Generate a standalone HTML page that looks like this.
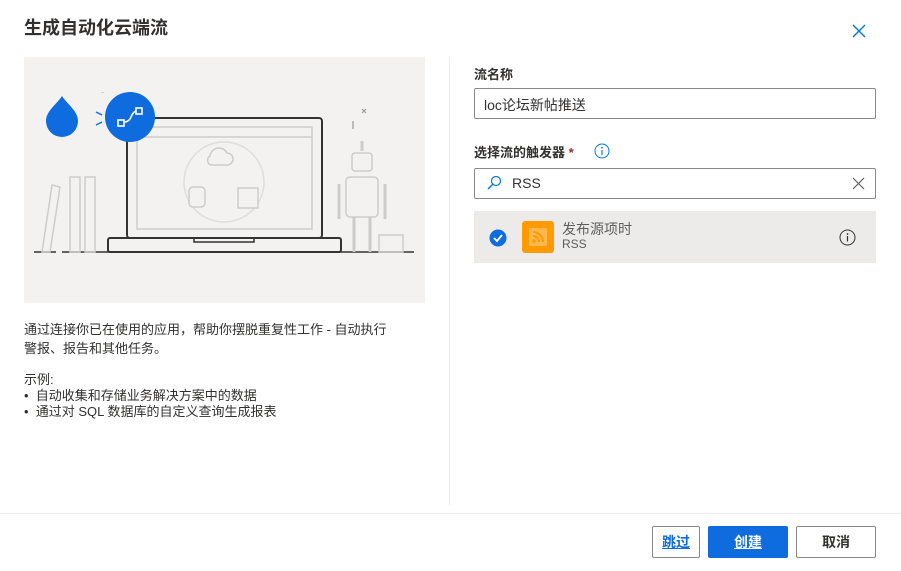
<!DOCTYPE html>
<html><head><meta charset="utf-8"><style>
*{box-sizing:border-box;margin:0;padding:0}
body{width:901px;height:571px;background:#fff;font-family:"Liberation Sans","Noto Sans CJK SC",sans-serif;color:#323130;position:relative;overflow:hidden;font-size:13px}
.a{position:absolute}
.inp{position:absolute;left:474px;width:402px;height:31px;border:1px solid #8a8886;border-radius:2px;font-size:14px}
.btn{position:absolute;top:526px;height:32px;border:1px solid #8a8886;border-radius:2px;font-size:14px;font-weight:bold;text-align:center;line-height:30px}
</style></head><body>
<div class="a" style="left:24px;top:14px;font-size:18px;font-weight:bold;color:#323130">生成自动化云端流</div>
<svg class="a" style="left:852px;top:24px" width="14" height="14"><path d="M1 1L13 13M13 1L1 13" stroke="#0078d4" stroke-width="1.4"/></svg>
<div class="a" style="left:24px;top:57px;width:401px;height:246px;background:#f3f2f1"></div>
<svg class="a" style="left:24px;top:57px" width="401" height="246" fill="none">
<path d="M38 20C33 28 22 35 22 45a16 16 0 0 0 32 0c0-10-11-17-16-25z" transform="translate(0,19)" fill="#0f6cde"/>
<path d="M72 55l6 3M72 68l6-3" stroke="#0f6cde" stroke-width="1.5"/>
<rect x="77" y="35" width="3" height="1" fill="#ccc"/>
<rect x="103" y="61" width="195" height="120" rx="3" stroke="#333" stroke-width="2"/>
<rect x="113" y="70" width="175" height="102" stroke="#ccc" stroke-width="1.5"/>
<path d="M113 80h175" stroke="#ccc" stroke-width="1.5"/>
<rect x="84" y="181" width="233" height="14" rx="2" stroke="#333" stroke-width="2"/>
<path d="M170 182v3h60v-3" stroke="#333" stroke-width="1.5"/>
<path d="M10 195h22M38 195h352" stroke="#333" stroke-width="1.5"/>
<circle cx="200" cy="125" r="40" stroke="#ddd" stroke-width="1.5"/>
<path d="M187 108h16a6 6 0 0 0 0-12 9 9 0 0 0-17 3 5 5 0 0 0 1 9z" fill="#f3f2f1" stroke="#ccc" stroke-width="1.5"/>
<rect x="165" y="130" width="16" height="20" rx="4" fill="#f3f2f1" stroke="#ccc" stroke-width="1.5"/>
<rect x="214" y="131" width="20" height="20" fill="#f3f2f1" stroke="#ccc" stroke-width="1.5"/>
<path d="M18 195l10-67 8 2-10 65zM46 120h10v75H46zM61 120h10v75H61z" stroke="#ccc" stroke-width="1.5"/>
<path d="M329 64v8M338 52l4 4M342 52l-4 4" stroke="#999" stroke-width="1.2"/>
<rect x="328" y="96" width="20" height="18" rx="3" stroke="#ccc" stroke-width="1.5"/>
<rect x="322" y="120" width="32" height="40" rx="4" stroke="#ccc" stroke-width="1.5"/>
<path d="M315 127v35M361 127v35M330 160v35M346 160v35M338 84v10" stroke="#ccc" stroke-width="3"/>
<rect x="355" y="178" width="24" height="17" stroke="#ccc" stroke-width="1.5"/>
</svg>
<svg class="a" style="left:104px;top:91px" width="52" height="52"><circle cx="26" cy="26" r="25" fill="#0f6cde"/><rect x="14" y="29" width="6" height="6" stroke="#fff" stroke-width="1.6" fill="none"/><rect x="32" y="17" width="6" height="6" stroke="#fff" stroke-width="1.6" fill="none"/><path d="M20 31q5 0 7-5t5-6" stroke="#fff" stroke-width="1.6" fill="none"/></svg>
<div class="a" style="left:24px;top:320px;line-height:19px;font-size:13px;color:#323130">通过连接你已在使用的应用，帮助你摆脱重复性工作 - 自动执行<br>警报、报告和其他任务。</div>
<div class="a" style="left:24px;top:372px;line-height:16px;font-size:13px">示例:<br>• &nbsp;自动收集和存储业务解决方案中的数据<br>• &nbsp;通过对 SQL 数据库的自定义查询生成报表</div>
<div class="a" style="left:449px;top:57px;width:1px;height:448px;background:#edebe9"></div>
<div class="a" style="left:0;top:513px;width:901px;height:1px;background:#edebe9"></div>
<div class="a" style="left:474px;top:64px;font-weight:bold;font-size:13px">流名称</div>
<div class="inp" style="top:88px;padding:6px 0 0 9px">loc论坛新帖推送</div>
<div class="a" style="left:474px;top:142px;font-weight:bold;font-size:13px">选择流的触发器 <span style="color:#a4262c">*</span></div>
<svg class="a" style="left:594px;top:143px" width="16" height="16"><circle cx="8" cy="8" r="7" stroke="#0078d4" fill="none"/><path d="M8 7v5" stroke="#0078d4" stroke-width="1.2"/><circle cx="8" cy="4.7" r=".9" fill="#0078d4"/></svg>
<div class="inp" style="top:168px;padding:6px 0 0 37px">RSS</div>
<svg class="a" style="left:486px;top:175px" width="16" height="16" fill="none"><circle cx="10" cy="6" r="4.5" stroke="#0078d4" stroke-width="1.2"/><path d="M7 9l-5 5" stroke="#0078d4" stroke-width="1.4"/></svg>
<svg class="a" style="left:852px;top:177px" width="13" height="13"><path d="M1 1l11 11M12 1L1 12" stroke="#605e5c" stroke-width="1.2"/></svg>
<div class="a" style="left:474px;top:211px;width:402px;height:52px;background:#edebe9"></div>
<svg class="a" style="left:489px;top:229px" width="18" height="18"><circle cx="9" cy="9" r="8.5" fill="#0f6cde"/><path d="M5 9l3 3 5-6" stroke="#fff" stroke-width="1.8" fill="none"/></svg>
<div class="a" style="left:522px;top:221px;width:32px;height:32px;background:#ff9a00;border-radius:3px"></div>
<svg class="a" style="left:529px;top:228px" width="18" height="18"><rect width="18" height="18" rx="2" fill="#ffb84d"/><circle cx="5" cy="13" r="1.8" fill="#ff9a00"/><path d="M4 8a6 6 0 0 1 6 6M4 4a10 10 0 0 1 10 10" stroke="#ff9a00" stroke-width="2" fill="none"/></svg>
<div class="a" style="left:562px;top:219px;font-size:14px;color:#605e5c">发布源项时</div>
<div class="a" style="left:562px;top:237px;font-size:12px;color:#605e5c">RSS</div>
<svg class="a" style="left:839px;top:229px" width="17" height="17"><circle cx="8.5" cy="8.5" r="7.5" stroke="#323130" fill="none"/><path d="M8.5 7v5.5" stroke="#323130" stroke-width="1.2"/><circle cx="8.5" cy="5" r=".9" fill="#323130"/></svg>
<div class="btn" style="left:652px;width:48px;color:#0f6cde;text-decoration:underline">跳过</div>
<div class="btn" style="left:708px;width:80px;background:#0f6cde;border-color:#0f6cde;color:#fff;text-decoration:underline">创建</div>
<div class="btn" style="left:796px;width:80px;color:#323130">取消</div>
</body></html>
